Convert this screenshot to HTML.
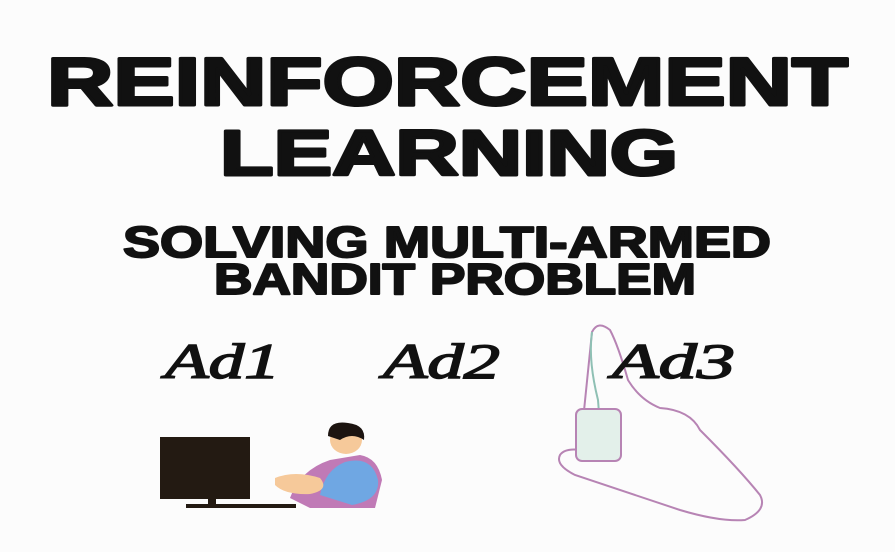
<!DOCTYPE html>
<html><head><style>
html,body{margin:0;padding:0;background:#fcfcfc;}
svg{display:block}
</style></head><body>
<svg width="895" height="552" viewBox="0 0 895 552" xmlns="http://www.w3.org/2000/svg">
<rect width="895" height="552" fill="#fcfcfc"/>
<g font-family="Liberation Sans, sans-serif" font-weight="bold" fill="#111" stroke="#111" stroke-linejoin="round">
<text x="47" y="105" font-size="68" stroke-width="3" textLength="801" lengthAdjust="spacingAndGlyphs">REINFORCEMENT</text>
<text x="220" y="175" font-size="64" stroke-width="3" textLength="458" lengthAdjust="spacingAndGlyphs">LEARNING</text>
<text x="123" y="257" font-size="44" stroke-width="2" textLength="648" lengthAdjust="spacingAndGlyphs">SOLVING MULTI-ARMED</text>
<text x="214" y="294" font-size="44" stroke-width="2" textLength="482" lengthAdjust="spacingAndGlyphs">BANDIT PROBLEM</text>
</g>
<!-- hand -->
<g fill="none" stroke-width="2">
<path d="M592 332 Q598 320 610 330 Q618 345 628 380 Q640 400 660 408 Q690 410 700 430 Q740 470 760 495 Q768 510 745 520 Q720 522 680 510 Q620 490 575 475 Q555 465 560 455 Q565 448 580 450 Z" stroke="#b784b4"/>
<path d="M592 332 Q588 360 598 400 Q600 420 598 435" stroke="#8fc0b4"/>
<rect x="576" y="409" width="45" height="52" rx="6" fill="#e3f0ea" stroke="#b784b4"/>
</g>
<g font-family="Liberation Serif, serif" font-style="italic" fill="#111" stroke="#111" stroke-width="1.5" font-size="50">
<text x="165" y="378" textLength="115" lengthAdjust="spacingAndGlyphs">Ad1</text>
<text x="383" y="378" textLength="117" lengthAdjust="spacingAndGlyphs">Ad2</text>
<text x="612" y="378" textLength="123" lengthAdjust="spacingAndGlyphs">Ad3</text>
</g>
<!-- computer -->
<rect x="160" y="437" width="90" height="62" fill="#231a12"/>
<rect x="208" y="498" width="8" height="8" fill="#231a12"/>
<rect x="186" y="504" width="110" height="4" fill="#231a12"/>
<!-- person -->
<path d="M290 498 Q300 470 330 460 L360 455 Q378 458 382 480 L375 508 L310 508 Z" fill="#c07ab6"/>
<path d="M345 462 Q372 455 378 480 Q380 500 352 505 L320 495 Q325 470 345 462 Z" fill="#6fa7e3"/>
<path d="M275 478 Q295 470 320 478 Q330 490 310 494 Q285 495 275 485 Z" fill="#f6c99a"/>
<ellipse cx="346" cy="440" rx="16" ry="14" fill="#f6c99a"/>
<path d="M328 436 Q328 420 348 423 Q366 425 364 440 Q352 432 340 440 Z" fill="#1c1410"/>
</svg>
</body></html>
